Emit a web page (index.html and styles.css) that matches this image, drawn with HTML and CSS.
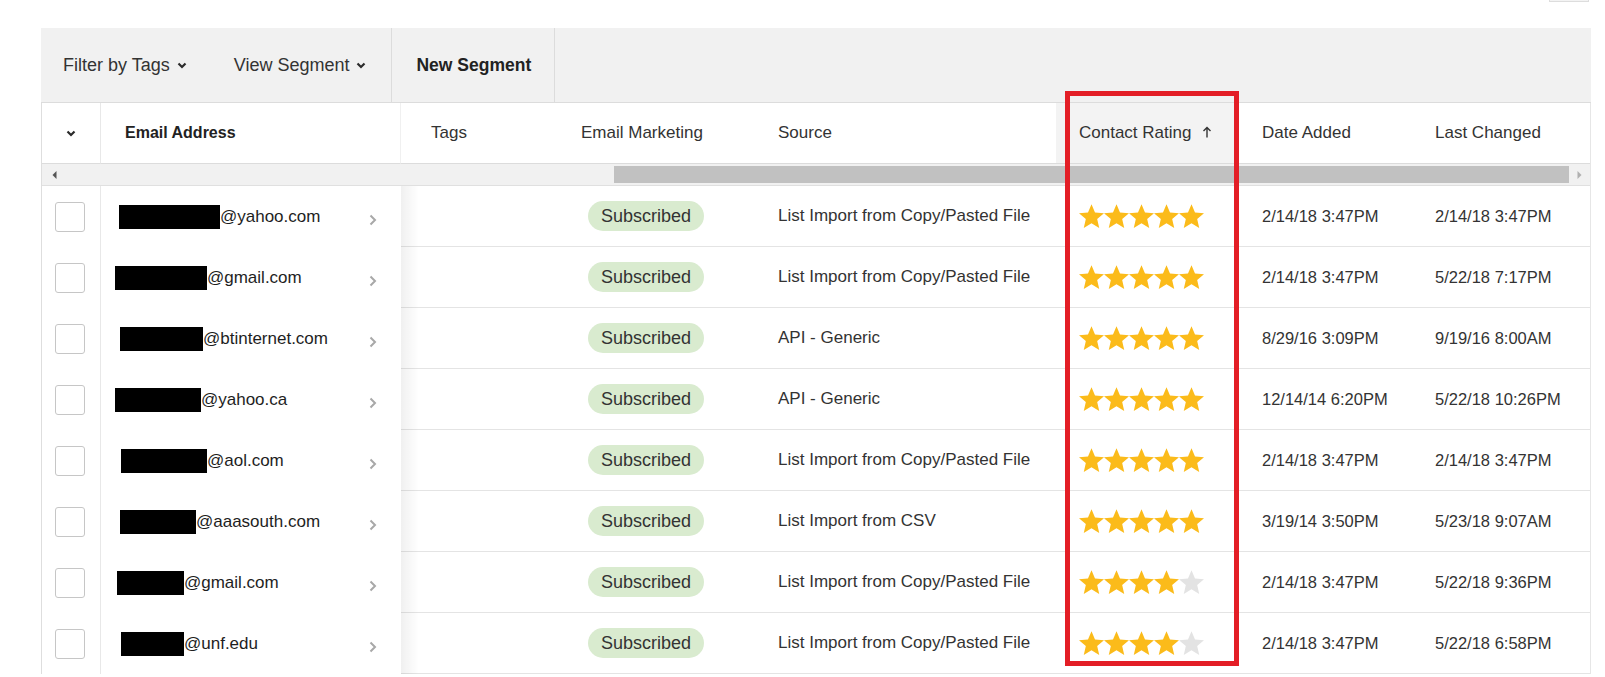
FILE: index.html
```html
<!DOCTYPE html>
<html lang="en">
<head>
    <meta charset="UTF-8">
    <meta name="viewport" content="width=device-width, initial-scale=1.0">
    <title>Contacts</title>
    <link rel="stylesheet" href="styles.css">
</head>
<body>
    <svg class="defs" width="0" height="0">
        <symbol id="star" viewBox="2 2 20 19">
            <polygon points="12,17.27 18.18,21 16.54,13.97 22,9.24 14.81,8.63 12,2 9.19,8.63 2,9.24 7.46,13.97 5.82,21"/>
        </symbol>
        <symbol id="down" viewBox="0 0 10 7">
            <polyline points="1.5,1.5 5,5 8.5,1.5" fill="none" stroke="currentColor" stroke-width="2.2"/>
        </symbol>
        <symbol id="right" viewBox="0 0 8 12">
            <polyline points="1.5,1.5 6,6 1.5,10.5" fill="none" stroke="currentColor" stroke-width="2"/>
        </symbol>
    </svg>

    <div class="top"><span class="top-btn"></span></div>

    <div class="panel">
        <!-- toolbar -->
        <div class="toolbar">
            <div class="filters">
                <button class="drop">Filter by Tags <svg class="caret"><use href="#down"/></svg></button>
                <button class="drop">View Segment <svg class="caret"><use href="#down"/></svg></button>
            </div>
            <button class="new-seg">New Segment</button>
        </div>

        <!-- contacts table -->
        <div class="table">
            <div class="row head">
                <div class="cell c-check"><svg class="caret"><use href="#down"/></svg></div>
                <div class="cell c-email">Email Address</div>
                <div class="cell c-tags">Tags</div>
                <div class="cell">Email Marketing</div>
                <div class="cell">Source</div>
                <div class="cell c-rating sorted">Contact Rating
                    <svg class="sort" viewBox="0 0 10 12"><path d="M5 11.5V1.5M1.5 5L5 1.5L8.5 5" fill="none" stroke="#333" stroke-width="1.4"/></svg>
                </div>
                <div class="cell c-date">Date Added</div>
                <div class="cell">Last Changed</div>
            </div>

            <div class="scroll">
                <span class="sb-arrow"><svg viewBox="0 0 5 8"><polygon points="4.5,0 0.5,4 4.5,8" fill="#555"/></svg></span>
                <span class="sb-track"><span class="sb-thumb"></span></span>
                <span class="sb-arrow sb-right"><svg viewBox="0 0 5 8"><polygon points="0.5,0 4.5,4 0.5,8" fill="#b0b0b0"/></svg></span>
            </div>

            <div class="row">
                <div class="cell c-check"><span class="check"></span></div>
                <div class="cell c-email"><span class="addr"><span class="hide" style="margin-left:1px;width:101px"></span>@yahoo.com</span><svg class="go"><use href="#right"/></svg></div>
                <div class="cell c-tags"></div>
                <div class="cell"><span class="pill">Subscribed</span></div>
                <div class="cell">List Import from Copy/Pasted File</div>
                <div class="cell c-rating"><span class="stars"><svg><use href="#star"/></svg><svg><use href="#star"/></svg><svg><use href="#star"/></svg><svg><use href="#star"/></svg><svg><use href="#star"/></svg></span></div>
                <div class="cell c-date"><span class="date">2/14/18 3:47PM</span></div>
                <div class="cell"><span class="date">2/14/18 3:47PM</span></div>
            </div>

            <div class="row">
                <div class="cell c-check"><span class="check"></span></div>
                <div class="cell c-email"><span class="addr"><span class="hide" style="margin-left:-3px;width:92px"></span>@gmail.com</span><svg class="go"><use href="#right"/></svg></div>
                <div class="cell c-tags"></div>
                <div class="cell"><span class="pill">Subscribed</span></div>
                <div class="cell">List Import from Copy/Pasted File</div>
                <div class="cell c-rating"><span class="stars"><svg><use href="#star"/></svg><svg><use href="#star"/></svg><svg><use href="#star"/></svg><svg><use href="#star"/></svg><svg><use href="#star"/></svg></span></div>
                <div class="cell c-date"><span class="date">2/14/18 3:47PM</span></div>
                <div class="cell"><span class="date">5/22/18 7:17PM</span></div>
            </div>

            <div class="row">
                <div class="cell c-check"><span class="check"></span></div>
                <div class="cell c-email"><span class="addr"><span class="hide" style="margin-left:2px;width:83px"></span>@btinternet.com</span><svg class="go"><use href="#right"/></svg></div>
                <div class="cell c-tags"></div>
                <div class="cell"><span class="pill">Subscribed</span></div>
                <div class="cell">API - Generic</div>
                <div class="cell c-rating"><span class="stars"><svg><use href="#star"/></svg><svg><use href="#star"/></svg><svg><use href="#star"/></svg><svg><use href="#star"/></svg><svg><use href="#star"/></svg></span></div>
                <div class="cell c-date"><span class="date">8/29/16 3:09PM</span></div>
                <div class="cell"><span class="date">9/19/16 8:00AM</span></div>
            </div>

            <div class="row">
                <div class="cell c-check"><span class="check"></span></div>
                <div class="cell c-email"><span class="addr"><span class="hide" style="margin-left:-3px;width:86px"></span>@yahoo.ca</span><svg class="go"><use href="#right"/></svg></div>
                <div class="cell c-tags"></div>
                <div class="cell"><span class="pill">Subscribed</span></div>
                <div class="cell">API - Generic</div>
                <div class="cell c-rating"><span class="stars"><svg><use href="#star"/></svg><svg><use href="#star"/></svg><svg><use href="#star"/></svg><svg><use href="#star"/></svg><svg><use href="#star"/></svg></span></div>
                <div class="cell c-date"><span class="date">12/14/14 6:20PM</span></div>
                <div class="cell"><span class="date">5/22/18 10:26PM</span></div>
            </div>

            <div class="row">
                <div class="cell c-check"><span class="check"></span></div>
                <div class="cell c-email"><span class="addr"><span class="hide" style="margin-left:3px;width:86px"></span>@aol.com</span><svg class="go"><use href="#right"/></svg></div>
                <div class="cell c-tags"></div>
                <div class="cell"><span class="pill">Subscribed</span></div>
                <div class="cell">List Import from Copy/Pasted File</div>
                <div class="cell c-rating"><span class="stars"><svg><use href="#star"/></svg><svg><use href="#star"/></svg><svg><use href="#star"/></svg><svg><use href="#star"/></svg><svg><use href="#star"/></svg></span></div>
                <div class="cell c-date"><span class="date">2/14/18 3:47PM</span></div>
                <div class="cell"><span class="date">2/14/18 3:47PM</span></div>
            </div>

            <div class="row">
                <div class="cell c-check"><span class="check"></span></div>
                <div class="cell c-email"><span class="addr"><span class="hide" style="margin-left:2px;width:76px"></span>@aaasouth.com</span><svg class="go"><use href="#right"/></svg></div>
                <div class="cell c-tags"></div>
                <div class="cell"><span class="pill">Subscribed</span></div>
                <div class="cell">List Import from CSV</div>
                <div class="cell c-rating"><span class="stars"><svg><use href="#star"/></svg><svg><use href="#star"/></svg><svg><use href="#star"/></svg><svg><use href="#star"/></svg><svg><use href="#star"/></svg></span></div>
                <div class="cell c-date"><span class="date">3/19/14 3:50PM</span></div>
                <div class="cell"><span class="date">5/23/18 9:07AM</span></div>
            </div>

            <div class="row">
                <div class="cell c-check"><span class="check"></span></div>
                <div class="cell c-email"><span class="addr"><span class="hide" style="margin-left:-1px;width:67px"></span>@gmail.com</span><svg class="go"><use href="#right"/></svg></div>
                <div class="cell c-tags"></div>
                <div class="cell"><span class="pill">Subscribed</span></div>
                <div class="cell">List Import from Copy/Pasted File</div>
                <div class="cell c-rating"><span class="stars"><svg><use href="#star"/></svg><svg><use href="#star"/></svg><svg><use href="#star"/></svg><svg><use href="#star"/></svg><svg class="off"><use href="#star"/></svg></span></div>
                <div class="cell c-date"><span class="date">2/14/18 3:47PM</span></div>
                <div class="cell"><span class="date">5/22/18 9:36PM</span></div>
            </div>

            <div class="row">
                <div class="cell c-check"><span class="check"></span></div>
                <div class="cell c-email"><span class="addr"><span class="hide" style="margin-left:3px;width:63px"></span>@unf.edu</span><svg class="go"><use href="#right"/></svg></div>
                <div class="cell c-tags"></div>
                <div class="cell"><span class="pill">Subscribed</span></div>
                <div class="cell">List Import from Copy/Pasted File</div>
                <div class="cell c-rating"><span class="stars"><svg><use href="#star"/></svg><svg><use href="#star"/></svg><svg><use href="#star"/></svg><svg><use href="#star"/></svg><svg class="off"><use href="#star"/></svg></span></div>
                <div class="cell c-date"><span class="date">2/14/18 3:47PM</span></div>
                <div class="cell"><span class="date">5/22/18 6:58PM</span></div>
            </div>
        </div>
    </div>

    <!-- red highlight drawn over the rating column -->
    <div class="highlight"></div>
</body>
</html>
```

FILE: styles.css
```css
* {
    box-sizing: border-box;
}
body {
    margin: 0;
    font-family: "Liberation Sans", Arial, sans-serif;
    font-size: 17px;
    color: #333;
    background: #fff;
    position: relative;
    height: 677px;
    overflow: hidden;
}
.defs {
    position: absolute;
}
.top {
    height: 28px;
    display: flex;
    justify-content: flex-end;
    padding-right: 16px;
}
.top-btn {
    width: 40px;
    height: 2px;
    background: #f3f3f3;
    border: 1px solid #ddd;
    border-top: none;
}
.panel {
    margin: 0 14px 0 41px;
}
.toolbar {
    display: flex;
    height: 75px;
    background: #f1f1f1;
    border-bottom: 1px solid #dcdcdc;
}
.filters {
    display: flex;
    align-items: center;
    gap: 47px;
    padding: 0 25px 0 22px;
}
.drop {
    display: flex;
    align-items: center;
    gap: 7px;
    padding: 0;
    border: none;
    background: none;
    font-family: inherit;
    font-size: 18px;
    color: #333;
}
.caret {
    width: 10px;
    height: 7px;
    color: #2b2b2b;
}
.new-seg {
    padding: 0 23px 0 24px;
    border: none;
    border-left: 1px solid #dcdcdc;
    border-right: 1px solid #dcdcdc;
    background: none;
    font-family: inherit;
    font-size: 17.5px;
    font-weight: bold;
    color: #222;
}
.table {
    border-left: 1px solid #dedede;
    border-right: 1px solid #e6e6e6;
}
.row {
    display: grid;
    grid-template-columns: 59px 300px 156px 197px 302px 180px 175px 1fr;
}
.cell {
    display: flex;
    align-items: center;
    height: 61px;
    padding-left: 24px;
    border-bottom: 1px solid #e4e4e4;
    white-space: nowrap;
}
.c-check {
    padding-left: 13px;
    border-right: 1px solid #e8e8e8;
    border-bottom: none;
}
.c-email {
    position: relative;
    justify-content: space-between;
    padding-left: 17px;
    padding-right: 24px;
    border-bottom: none;
}
.c-email::after {
    content: "";
    position: absolute;
    top: 0;
    bottom: 0;
    left: 100%;
    width: 18px;
    background: linear-gradient(to right, rgba(0, 0, 0, 0.06), rgba(0, 0, 0, 0));
}
.c-tags {
    padding-left: 30px;
}
.c-rating {
    padding-left: 23px;
}
.c-date {
    padding-left: 26px;
}
.head .cell {
    border-bottom: 1px solid #dcdcdc;
}
.head .c-check {
    justify-content: center;
    padding-left: 0;
}
.head .c-email {
    padding-left: 24px;
    font-size: 16px;
    font-weight: bold;
    color: #222;
    border-right: 1px solid #f0f0f0;
}
.head .c-email::after {
    display: none;
}
.head .sorted {
    background: #f3f3f3;
}
.sort {
    width: 10px;
    height: 12px;
    margin: 0 0 3px 11px;
}
.scroll {
    display: flex;
    height: 22px;
    background: #f1f1f1;
    border-bottom: 1px solid #e0e0e0;
}
.sb-arrow {
    display: flex;
    align-items: center;
    justify-content: center;
    width: 24px;
}
.sb-arrow svg {
    width: 5px;
    height: 8px;
}
.sb-right {
    width: 21px;
}
.sb-track {
    flex: 1;
    display: flex;
    align-items: center;
    padding-left: 548px;
}
.sb-thumb {
    flex: 1;
    height: 17px;
    background: #c1c1c1;
}
.check {
    width: 30px;
    height: 30px;
    border: 1px solid #c6c6c6;
    border-radius: 3px;
    background: #fff;
}
.addr {
    display: flex;
    align-items: center;
    color: #1e1e1e;
}
.hide {
    display: inline-block;
    height: 24px;
    background: #000;
}
.go {
    width: 8px;
    height: 12px;
    margin-top: 6px;
    color: #a8a8a8;
}
.pill {
    display: inline-flex;
    align-items: center;
    height: 30px;
    margin-left: 7px;
    padding: 0 13px;
    border-radius: 15px;
    background: #d9ebcf;
    font-size: 18px;
    color: #333;
}
.stars {
    display: flex;
}
.stars svg {
    width: 25px;
    height: 24px;
    fill: #fbbb1a;
}
.stars svg.off {
    fill: #e3e3e3;
}
.date {
    font-size: 16.5px;
}
.highlight {
    position: absolute;
    left: 1065px;
    top: 91px;
    width: 174px;
    height: 575px;
    border: 5px solid #e31e26;
}
```
